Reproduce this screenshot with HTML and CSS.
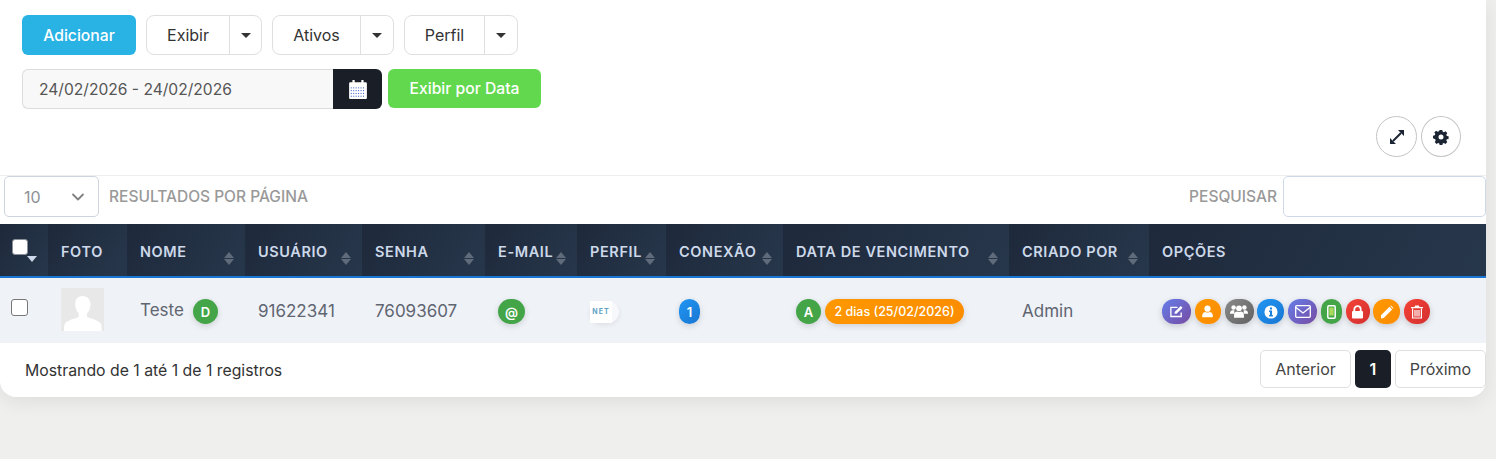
FILE: index.html
```html
<!DOCTYPE html>
<html>
<head>
    <meta charset="UTF-8">
    <title>Clientes</title>
    <link rel="stylesheet" href="styles.css">
</head>
<body>
    <div class="card">
        <div class="toolbar">
            <button class="btn-add">Adicionar</button>
            <div class="split split-exibir"><span class="split-label">Exibir</span><span class="split-caret"><i class="caret"></i></span></div>
            <div class="split split-ativos"><span class="split-label">Ativos</span><span class="split-caret"><i class="caret"></i></span></div>
            <div class="split split-perfil"><span class="split-label">Perfil</span><span class="split-caret"><i class="caret"></i></span></div>
        </div>

        <div class="date-row">
            <div class="date-input">24/02/2026 - 24/02/2026</div>
            <div class="date-btn">
                <svg width="20" height="20" viewBox="0 0 18 18">
                    <path fill="#fff" d="M1 4a1 1 0 0 1 1-1h2V1h2v2h6V1h2v2h2a1 1 0 0 1 1 1v13a1 1 0 0 1-1 1H2a1 1 0 0 1-1-1z"/>
                    <path stroke="#1a3fc0" stroke-width=".8" stroke-dasharray=".9 1.300" d="M2.500 8h13M2.500 10.500h13M2.500 13h13M2.500 15.500h13"/>
                </svg>
            </div>
            <button class="btn-date">Exibir por Data</button>
        </div>

        <div class="round-tools">
            <span class="round-btn">
                <svg width="16" height="16" viewBox="0 0 16 16"><path fill="none" stroke="#1b2433" stroke-width="2" d="M4 12l8-8"/><path fill="#1b2433" d="M9 1h6v6zM1 9v6h6z"/></svg>
            </span>
            <span class="round-btn round-gear">
                <svg width="16" height="16" viewBox="0 0 16 16"><path fill="#1b2433" fill-rule="evenodd" d="M6.700 1h2.600l.4 1.800 1.200.5 1.600-1 1.800 1.800-1 1.600.5 1.200 1.800.4v2.600l-1.800.4-.5 1.200 1 1.600-1.800 1.800-1.600-1-1.200.5-.4 1.800H6.700l-.4-1.800-1.200-.5-1.600 1-1.800-1.800 1-1.600-.5-1.200L0 9.300V6.700l1.800-.4.500-1.200-1-1.600 1.800-1.800 1.600 1 1.200-.5zM8 5.500a2.500 2.500 0 1 0 0 5 2.500 2.500 0 0 0 0-5z"/></svg>
            </span>
        </div>

        <div class="table-top">
            <div class="length">
                <div class="select">
                    <span>10</span>
                    <svg width="14" height="8" viewBox="0 0 14 8"><path fill="none" stroke="#808080" stroke-width="1.800" stroke-linecap="round" stroke-linejoin="round" d="M2 1.500l5 5 5-5"/></svg>
                </div>
                <span class="muted-label">RESULTADOS POR PÁGINA</span>
            </div>
            <div class="search">
                <span class="muted-label">PESQUISAR</span>
                <div class="search-input"></div>
            </div>
        </div>

        <table class="grid">
            <thead>
                <tr>
                    <th class="col-check"><span class="head-check"></span><i class="head-caret"></i></th>
                    <th class="col-foto">FOTO</th>
                    <th class="col-nome sort">NOME</th>
                    <th class="col-user sort">USUÁRIO</th>
                    <th class="col-senha sort">SENHA</th>
                    <th class="col-email sort">E-MAIL</th>
                    <th class="col-perfil sort">PERFIL</th>
                    <th class="col-conexao sort">CONEXÃO</th>
                    <th class="col-venc sort">DATA DE VENCIMENTO</th>
                    <th class="col-criado sort">CRIADO POR</th>
                    <th class="col-opcoes">OPÇÕES</th>
                </tr>
            </thead>
            <tbody>
                <tr>
                    <td class="col-check"><span class="row-check"></span></td>
                    <td>
                        <svg class="avatar" width="43" height="43" viewBox="0 0 43 43">
                            <rect width="43" height="43" fill="#e8e8e8"/>
                            <path fill="#fff" d="M21.500 8c5 0 8 3.500 8 8.500 0 3.500-1.500 7-3.500 9v3.500c3 1.500 12 3 14 7 .6 1.500.7 4 .7 7H3c0-3 .1-5.500.7-7 2-4 11-5.500 14-7v-3.500c-2-2-3.500-5.500-3.500-9C14.200 11.500 16.500 8 21.500 8z"/>
                        </svg>
                    </td>
                    <td class="name-cell"><span class="name-text">Teste</span><span class="badge badge-green badge-d">D</span></td>
                    <td>91622341</td>
                    <td>76093607</td>
                    <td><span class="badge badge-green badge-mail">@</span></td>
                    <td>
                        <span class="logo-pill"><span class="logo-box">NET</span></span>
                    </td>
                    <td><span class="badge badge-blue badge-one">1</span></td>
                    <td>
                        <div class="venc">
                            <span class="badge badge-green badge-a">A</span>
                            <span class="badge badge-orange badge-days">2 dias (25/02/2026)</span>
                        </div>
                    </td>
                    <td>Admin</td>
                    <td>
                        <div class="options">
                            <span class="opt opt-purple w29"><svg width="15" height="15" viewBox="0 0 16 16"><path fill="none" stroke="#fff" stroke-width="1.400" d="M13 9v4.300H2V3.500h7"/><path fill="#fff" d="M6 8.500L12.500 2 14.500 4 8 10.500H6z"/></svg></span>
                            <span class="opt opt-orange w26"><svg width="13" height="13" viewBox="0 0 16 16"><circle cx="8" cy="4.500" r="3.800" fill="#fff"/><path fill="#fff" d="M1.500 15v-2.500C1.500 10 4 8.500 5.500 8.500c1.500 1 3.500 1 5 0 1.500 0 4 1.500 4 4V15z"/></svg></span>
                            <span class="opt opt-gray w29"><svg width="18" height="15" viewBox="0 0 20 16"><circle cx="4" cy="3.500" r="2.500" fill="#fff"/><circle cx="16" cy="3.500" r="2.500" fill="#fff"/><circle cx="10" cy="4.500" r="3.200" fill="#fff"/><path fill="#fff" d="M0 10c0-2.500 1.500-3.500 3-3.500h2c-.5 1-.5 3 .5 4H0zM20 10c0-2.500-1.500-3.500-3-3.500h-2c.5 1 .5 3-.5 4H20zM4.500 15v-2.500c0-3 1.500-4.500 3.500-4.500 1.200.8 2.800.8 4 0 2 0 3.500 1.500 3.500 4.500V15z"/></svg></span>
                            <span class="opt opt-blue w27"><svg width="14" height="14" viewBox="0 0 16 16"><circle cx="8" cy="8" r="7.500" fill="#fff"/><path fill="#1b80dc" d="M6.800 2.800h2.400v2.200H6.800zM5.800 6.300h3.400v5.200h1v1.600H5.800v-1.600h1V7.900h-1z"/></svg></span>
                            <span class="opt opt-purple w29"><svg width="16" height="13" viewBox="0 0 16 13"><rect x=".7" y=".7" width="14.600" height="11.600" rx="1" fill="none" stroke="#fff" stroke-width="1.300"/><path fill="none" stroke="#fff" stroke-width="1.300" d="M1 2.500l7 5.500 7-5.500"/></svg></span>
                            <span class="opt opt-green w21"><svg width="9" height="14" viewBox="0 0 9 14"><rect x=".8" y=".8" width="7.400" height="12.400" rx="1.200" fill="none" stroke="#fff" stroke-width="1.500"/><rect x="2.300" y="2.500" width="4.400" height="8" fill="#a8d95a"/></svg></span>
                            <span class="opt opt-red w24"><svg width="13" height="14" viewBox="0 0 13 14"><path fill="none" stroke="#fff" stroke-width="1.800" d="M3.300 6.500V4.300a3.200 3.200 0 0 1 6.400 0v2.200"/><rect x="1" y="6" width="11" height="7.500" rx="1" fill="#fff"/></svg></span>
                            <span class="opt opt-orange w27"><svg width="14" height="14" viewBox="0 0 14 14"><path fill="#fff" d="M1 10.300L9.500 1.800l2.700 2.700-8.500 8.500L1 13.500zM10.300 1l.7-.5 2.500 2.500-.5.700z"/></svg></span>
                            <span class="opt opt-red w26"><svg width="12" height="14" viewBox="0 0 12 14"><path fill="#fff" d="M0 2h3.500l.7-1.500h3.600L8.500 2H12v1.300H0z"/><path fill="none" stroke="#fff" stroke-width="1.200" d="M1.600 3.500V13h8.800V3.500M4 5v6.500M6 5v6.500M8 5v6.500"/></svg></span>
                        </div>
                    </td>
                </tr>
            </tbody>
        </table>

        <div class="table-foot">
            <div class="info">Mostrando de 1 até 1 de 1 registros</div>
            <div class="pager">
                <span class="page page-text">Anterior</span>
                <span class="page page-current">1</span>
                <span class="page page-text">Próximo</span>
            </div>
        </div>
    </div>
</body>
</html>
```

FILE: styles.css
```css
* {
    box-sizing: border-box;
}

html, body {
    height: 100%;
}

body {
    margin: 0;
    padding: 0 10px 0 0;
    overflow: hidden;
    background-color: #efefed;
    color: #5a5f6b;
    font-family: "Inter", "Liberation Sans", sans-serif;
    font-size: 16px;
}

.card {
    height: 397px;
    padding-top: 15px;
    background-color: #fff;
    border-radius: 0 0 16px 16px;
    box-shadow: 0 4px 20px rgba(0, 0, 0, 0.08);
}

.toolbar {
    display: flex;
    gap: 10px;
    padding-left: 22px;
}

button {
    border: none;
    color: #fff;
    font-family: inherit;
    font-size: 15.700px;
    font-weight: 500;
}

.btn-add {
    width: 114px;
    height: 40px;
    background-color: #29b2e4;
    border-radius: 6px;
}

.split {
    display: flex;
    height: 40px;
    border: 1px solid #dfdfdf;
    border-radius: 8px;
    color: #333;
}

.split-exibir { width: 116px; }
.split-ativos { width: 122px; }
.split-perfil { width: 114px; }

.split-label {
    flex: 1;
    display: flex;
    align-items: center;
    justify-content: center;
}

.split-caret {
    width: 33px;
    display: flex;
    align-items: center;
    justify-content: center;
    border-left: 1px solid #dfdfdf;
}

.split-exibir .split-caret {
    width: 32px;
}

.caret {
    width: 0;
    height: 0;
    border-left: 5px solid transparent;
    border-right: 5px solid transparent;
    border-top: 5px solid #333;
}

.date-row {
    display: flex;
    height: 40px;
    margin-top: 14px;
    padding-left: 22px;
}

.date-input {
    width: 311px;
    display: flex;
    align-items: center;
    padding-left: 16px;
    background-color: #f8f8f8;
    border: 1px solid #dcdcdc;
    border-right: none;
    border-radius: 6px 0 0 6px;
    color: #555;
    font-size: 15.600px;
}

.date-btn {
    width: 49px;
    display: flex;
    align-items: center;
    justify-content: center;
    background-color: #1a1e27;
    border-radius: 0 6px 6px 0;
}

.btn-date {
    width: 153px;
    height: 39px;
    margin-left: 6px;
    background-color: #62d84e;
    border-radius: 6px;
}

.round-tools {
    display: flex;
    justify-content: flex-end;
    gap: 4px;
    height: 41px;
    margin-top: 7px;
    padding-right: 25px;
}

.round-btn {
    width: 41px;
    height: 41px;
    display: flex;
    align-items: center;
    justify-content: center;
    border: 1px solid #c4c4c4;
    border-radius: 50%;
}

.round-gear {
    width: 40px;
}

.table-top {
    display: flex;
    justify-content: space-between;
    height: 42px;
    margin-top: 18px;
    padding-left: 4px;
    border-top: 1px solid #eeeeee;
}

.length, .search {
    display: flex;
    align-items: center;
}

.select {
    width: 95px;
    height: 41px;
    display: flex;
    align-items: center;
    justify-content: space-between;
    padding: 0 13px 0 19px;
    border: 1px solid #ced4e0;
    border-radius: 5px;
    color: #8d9096;
}

.muted-label {
    color: #999;
    font-size: 15.500px;
    font-weight: 500;
}

.length .muted-label {
    margin-left: 10px;
}

.search-input {
    width: 203px;
    height: 41px;
    margin-left: 6px;
    border: 1px solid #ced9e8;
    border-radius: 5px;
}

.grid {
    width: 1486px;
    margin-top: 7px;
    table-layout: fixed;
    border-collapse: separate;
    border-spacing: 0;
}

.grid th {
    position: relative;
    height: 54px;
    padding: 2px 0 0 13px;
    background: linear-gradient(120deg, #1e293b, #27374b);
    border-bottom: 2px solid #1976d2;
    color: #cdd9ea;
    font-size: 14.500px;
    font-weight: 600;
    letter-spacing: 0.6px;
    text-align: left;
}

.grid td {
    height: 65px;
    padding: 0 0 0 13px;
    background-color: #eff2f7;
    font-size: 17px;
    color: #5f6571;
}

.col-check { width: 48px; }
.col-foto { width: 79px; }
.col-nome { width: 118px; }
.col-user { width: 117px; }
.col-senha { width: 123px; }
.col-email { width: 92px; }
.col-perfil { width: 89px; }
.col-conexao { width: 117px; }
.col-venc { width: 226px; }
.col-criado { width: 140px; }
.col-opcoes { width: 337px; }

.sort::before,
.sort::after {
    content: "";
    position: absolute;
    right: 11px;
    width: 0;
    height: 0;
    border-left: 5px solid transparent;
    border-right: 5px solid transparent;
}

.sort::before {
    top: 28px;
    border-bottom: 6px solid #5f6a7a;
}

.sort::after {
    top: 35px;
    border-top: 6px solid #5f6a7a;
}

.grid th.col-check {
    padding-left: 12px;
}

.grid td.col-check {
    padding-left: 11px;
}

.head-check {
    display: block;
    width: 16px;
    height: 16px;
    margin-top: -8px;
    background-color: #fff;
    border: 1px solid #8a8f98;
    border-radius: 3px;
}

.head-caret {
    position: absolute;
    left: 27px;
    top: 32px;
    width: 0;
    height: 0;
    border-left: 5px solid transparent;
    border-right: 5px solid transparent;
    border-top: 6px solid #cdd9ea;
}

.row-check {
    display: block;
    width: 17px;
    height: 17px;
    margin-top: -6px;
    background-color: #fff;
    border: 1.500px solid #777;
    border-radius: 3px;
}

.avatar {
    display: block;
    margin-top: -2px;
}

.name-cell {
    white-space: nowrap;
}

.name-text {
    margin-right: 9px;
    vertical-align: -1px;
}

.badge {
    display: inline-flex;
    align-items: center;
    justify-content: center;
    height: 25px;
    margin-top: 2px;
    border-radius: 13px;
    color: #fff;
    font-size: 13px;
    font-weight: 600;
    vertical-align: middle;
    box-shadow: 0 2px 6px rgba(0, 0, 0, 0.15);
}

.badge-green { background-color: #43a547; }
.badge-blue { background: linear-gradient(135deg, #2196f3, #1976d2); }
.badge-orange { background: linear-gradient(135deg, #ff9800, #fb8c00); }

.badge-d, .badge-a { width: 25px; }
.badge-mail { width: 27px; }
.badge-one { width: 21px; }

.badge-days {
    width: 139px;
    font-size: 12.500px;
    font-weight: 500;
}

.logo-pill {
    display: block;
    width: 29px;
    height: 22px;
    margin-top: 3px;
    background-color: #f7f8fb;
    border-radius: 11px;
    box-shadow: 0 2px 5px rgba(0, 0, 0, 0.08);
}

.logo-box {
    display: block;
    width: 22px;
    height: 22px;
    background-color: #fff;
    color: #5ea3c4;
    font-size: 7px;
    font-weight: 700;
    letter-spacing: 1px;
    line-height: 22px;
    text-align: center;
}

.venc {
    display: flex;
    gap: 4px;
}

.options {
    display: flex;
    gap: 3.750px;
    margin-top: 2px;
}

.opt {
    height: 25px;
    display: flex;
    align-items: center;
    justify-content: center;
    border-radius: 12px;
    box-shadow: 0 2px 6px rgba(0, 0, 0, 0.18);
}

.w21 { width: 21px; }
.w24 { width: 24px; }
.w26 { width: 26px; }
.w27 { width: 27px; }
.w29 { width: 29px; }

.opt-purple { background: linear-gradient(135deg, #667eea, #764ba2); }
.opt-orange { background: linear-gradient(135deg, #ff9800, #fb8c00); }
.opt-gray { background: linear-gradient(135deg, #8a8a8a, #616161); }
.opt-blue { background: linear-gradient(135deg, #2196f3, #1976d2); }
.opt-green { background-color: #43a547; }
.opt-red { background: linear-gradient(135deg, #f44336, #d32f2f); }

.table-foot {
    display: flex;
    align-items: center;
    justify-content: space-between;
    height: 52px;
    padding-left: 25px;
}

.info {
    padding-top: 2px;
    color: #333;
    font-size: 15.800px;
}

.pager {
    display: flex;
    gap: 4px;
}

.page {
    height: 38px;
    display: flex;
    align-items: center;
    justify-content: center;
    border-radius: 5px;
    font-size: 16px;
}

.page-text {
    width: 91px;
    border: 1px solid #dfdfdf;
    color: #444;
}

.page-current {
    width: 36px;
    background-color: #1a1e27;
    color: #fff;
    font-weight: 600;
}
```
